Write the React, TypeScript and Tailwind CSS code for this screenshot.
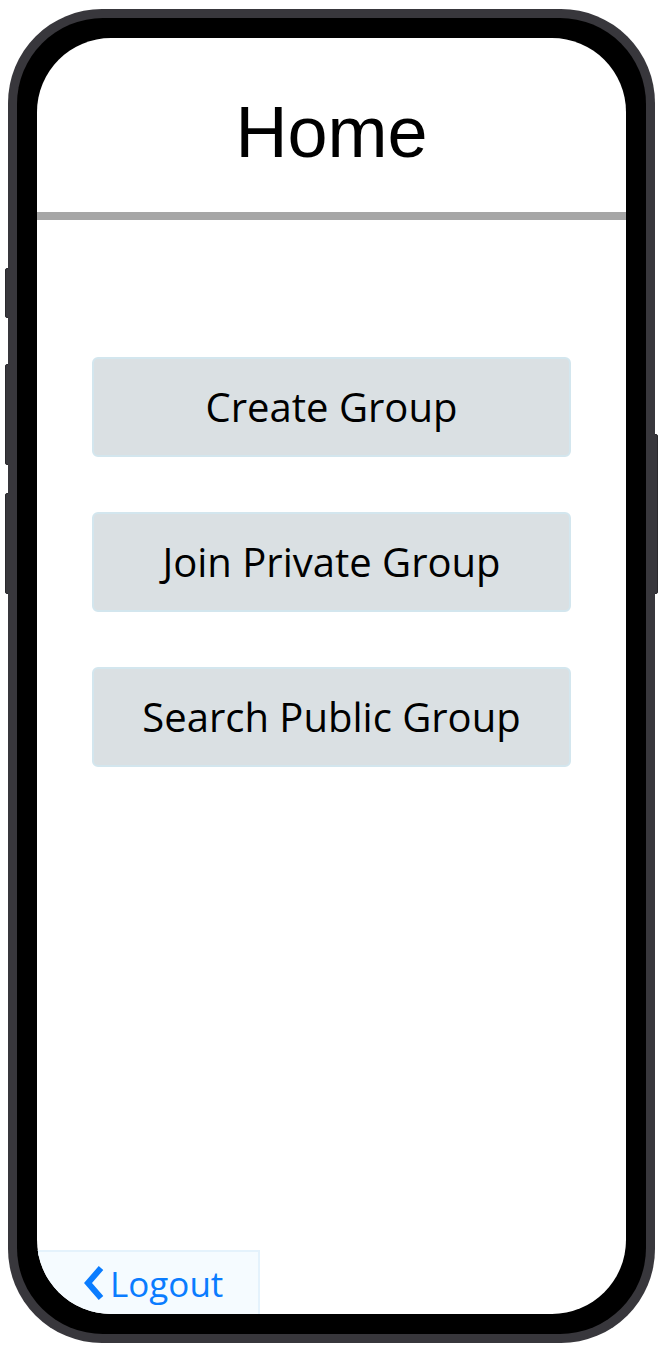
import React from "react";

const buttons = ["Create Group", "Join Private Group", "Search Public Group"];

export default function App() {
  return (
    <div className="relative w-[661px] h-[1354px] bg-white overflow-hidden">
      {/* side buttons */}
      <div className="absolute left-[5px] top-[268px] w-[6px] h-[50px] rounded-l-[2px] bg-[#38373c] border border-[#2a292d]" />
      <div className="absolute left-[5px] top-[364px] w-[6px] h-[101px] rounded-l-[2px] bg-[#38373c] border border-[#2a292d]" />
      <div className="absolute left-[5px] top-[493px] w-[6px] h-[101px] rounded-l-[2px] bg-[#38373c] border border-[#2a292d]" />
      <div className="absolute left-[650px] top-[434px] w-[8px] h-[160px] rounded-r-[2px] bg-[#38373c] border border-[#2a292d]" />

      <div className="relative mt-[9px] ml-[8px] w-[647px] h-[1334px] rounded-[94px] bg-[#38373c] p-[9px]">
        <div className="w-full h-full rounded-[86px] bg-black p-[20px]">
          <div className="w-full h-full rounded-[74px] bg-white overflow-hidden flex flex-col">
            <div className="h-[174px] flex items-center justify-center pt-[14px] shrink-0">
              <span className="text-[72px] leading-none text-black" style={{ fontFamily: '"Liberation Sans", Arial, sans-serif' }}>
                Home
              </span>
            </div>
            <div className="h-[8px] bg-[#a6a6a6] shrink-0" />
            <div
              className="flex-1 flex flex-col px-[55px] pt-[137px] gap-[55px]"
              style={{ fontFamily: '"Open Sans", "Noto Sans", sans-serif' }}
            >
              {buttons.map((b) => (
                <div
                  key={b}
                  className="h-[100px] flex items-center justify-center rounded-[6px] bg-[#dae0e3] border-2 border-[#d3e6ee] text-[40px] text-black"
                >
                  {b}
                </div>
              ))}
            </div>
            <div className="h-[64px] shrink-0 flex">
              <div
                className="w-[223px] h-[66px] bg-[#f5fbff] border-2 border-[#e4f2fc] flex items-center pl-[44px] gap-[5px] text-[#0a7cff] text-[35px]"
                style={{ fontFamily: '"Open Sans", "Noto Sans", sans-serif' }}
              >
                <svg width="22" height="36" viewBox="0 0 22 36" className="shrink-0">
                  <polyline points="18,3 5,18 18,33" fill="none" stroke="#0a7cff" strokeWidth="6" strokeLinejoin="miter" />
                </svg>
                <span className="leading-none">Logout</span>
              </div>
            </div>
          </div>
        </div>
      </div>
    </div>
  );
}
